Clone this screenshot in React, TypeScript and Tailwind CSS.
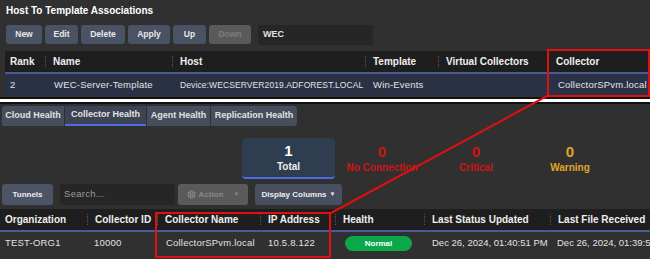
import { Settings } from "lucide-react";

const font = { fontFamily: '"Liberation Sans", Arial, sans-serif' };

const topCols = [
  { label: "Rank", w: "w-[40px]" },
  { label: "Name", w: "w-[127px]" },
  { label: "Host", w: "w-[193px]" },
  { label: "Template", w: "w-[73px]" },
  { label: "Virtual Collectors", w: "w-[110px]" },
  { label: "Collector", w: "flex-1" },
];

const botCols = [
  { label: "Organization", w: "w-[87px]" },
  { label: "Collector ID", w: "w-[70px]" },
  { label: "Collector Name", w: "w-[103px]" },
  { label: "IP Address", w: "w-[75px]" },
  { label: "Health", w: "w-[89px]" },
  { label: "Last Status Updated", w: "w-[126px]" },
  { label: "Last File Received", w: "flex-1" },
];

function HeaderRow({ cols, className }: { cols: { label: string; w: string }[]; className: string }) {
  return (
    <div className={`flex h-[21px] items-center bg-[#1e1e1e] text-[10px] font-bold text-[#eee] ${className}`}>
      {cols.map((c, i) => (
        <div key={c.label} className={`flex h-full shrink-0 items-center whitespace-nowrap ${c.w} ${i === 0 ? "pl-[5px]" : ""}`}>
          {i > 0 && <span className="mr-[7px] h-[11px] border-l border-dotted border-[#5a5a5a]" />}
          <span>{c.label}</span>
        </div>
      ))}
    </div>
  );
}

function TopButton({ label, disabled }: { label: string; disabled?: boolean }) {
  return (
    <button
      type="button"
      className={`h-[19px] rounded-[3px] text-[8.5px] font-bold whitespace-nowrap ${
        disabled ? "bg-[#5a5a5a] text-[#7d7d7d]" : "bg-[#4a5366] text-[#e8e8e8]"
      }`}
    >
      {label}
    </button>
  );
}

export default function App() {
  return (
    <div className="relative h-[259px] w-[650px] overflow-hidden bg-[#303030] text-[#e2e2e2]" style={font}>
      {/* top panel */}
      <div className="flex h-[97px] flex-col">
        <div className="pl-[6px] pt-[3px] text-[10px] font-bold leading-[16px] text-white">
          Host To Template Associations
        </div>
        <div className="mt-[6px] flex h-[19px] items-center gap-[3px] pl-[6px]">
          <div className="grid grid-cols-[36px_33px_44px_42px_33px_42px] gap-[3px]">
            <TopButton label="New" />
            <TopButton label="Edit" />
            <TopButton label="Delete" />
            <TopButton label="Apply" />
            <TopButton label="Up" />
            <TopButton label="Down" disabled />
          </div>
          <div className="ml-[4px] flex h-[20px] w-[115px] items-center rounded-[3px] bg-[#262626] px-[5px] text-[9px] font-bold">
            WEC
          </div>
        </div>
        <HeaderRow cols={topCols} className="ml-[5px] mt-[7px] h-[20px]" />
        <div className="ml-[5px] flex h-[24px] items-center whitespace-nowrap border-t-2 border-[#4a5a96] bg-[#2b3145] text-[9.5px] tracking-[0.2px]">
          <div className="w-[40px] shrink-0 pl-[5px]">2</div>
          <div className="w-[127px] shrink-0 pl-[9px]">WEC-Server-Template</div>
          <div className="w-[193px] shrink-0 pl-[8px] text-[8.5px] tracking-[0.1px]">Device:WECSERVER2019.ADFOREST.LOCAL</div>
          <div className="w-[73px] shrink-0 pl-[8px]">Win-Events</div>
          <div className="w-[110px] shrink-0" />
          <div className="flex-1 pl-[10px]">CollectorSPvm.local</div>
        </div>
      </div>

      {/* separator between the two captures */}
      <div className="h-[2px] bg-[#111]" />
      <div className="h-[3px] bg-white" />
      <div className="h-[2px] bg-[#111]" />

      {/* bottom panel */}
      <div className="flex flex-col">
        <div className="mt-[2px] flex h-[20px] gap-[1px] pl-[2px] text-[9px] font-bold whitespace-nowrap">
          <div className="flex w-[62px] items-center justify-center rounded-tl-[3px] bg-[#464d5b]">Cloud Health</div>
          <div className="flex w-[81px] items-center justify-center border-b-2 border-[#4a6ee0] bg-[#3c4352]">Collector Health</div>
          <div className="flex w-[63px] items-center justify-center bg-[#464d5b]">Agent Health</div>
          <div className="flex w-[86px] items-center justify-center rounded-r-[3px] bg-[#464d5b]">Replication Health</div>
        </div>

        <div className="ml-[242px] mt-[12px] grid h-[41px] grid-cols-[93px_94px_94px_94px] text-center font-bold whitespace-nowrap">
          <div className="flex flex-col items-center justify-center rounded-[4px] border-b-2 border-[#4a6ee0] bg-[#2f3d50]">
            <span className="text-[15px] leading-[19px] text-white">1</span>
            <span className="text-[10px] leading-[14px] text-[#eee]">Total</span>
          </div>
          <div className="flex flex-col items-center justify-center text-[#d01414]">
            <span className="text-[15px] leading-[19px]">0</span>
            <span className="text-[10px] leading-[14px]">No Connection</span>
          </div>
          <div className="flex flex-col items-center justify-center text-[#d01414]">
            <span className="text-[15px] leading-[19px]">0</span>
            <span className="text-[10px] leading-[14px]">Critical</span>
          </div>
          <div className="flex flex-col items-center justify-center text-[#e0a526]">
            <span className="text-[15px] leading-[19px]">0</span>
            <span className="text-[10px] leading-[14px]">Warning</span>
          </div>
        </div>

        <div className="mt-[5px] flex h-[21px] items-center pl-[2px] text-[8px] font-bold whitespace-nowrap">
          <button type="button" className="h-full w-[51px] rounded-[3px] bg-[#4c5566] text-[#eee]">Tunnels</button>
          <div className="ml-[7px] flex h-full w-[115px] items-center rounded-[3px] bg-[#262626] px-[4px] text-[9.5px] font-normal tracking-[0.3px] text-[#9a9a9a]">
            Search...
          </div>
          <button type="button" className="ml-[3px] flex h-full w-[70px] items-center justify-center gap-[3px] rounded-[3px] bg-[#5a5a5a] text-[#888]">
            <Settings size={9} strokeWidth={3} />
            <span>Action</span>
            <span className="ml-[7px] text-[6px]">▼</span>
          </button>
          <button type="button" className="ml-[7px] flex h-full w-[87px] items-center justify-center gap-[3px] rounded-[3px] bg-[#474f60] text-[#eee]">
            <span>Display Columns</span>
            <span className="text-[6px]">▼</span>
          </button>
        </div>

        <HeaderRow cols={botCols} className="mt-[4px]" />
        <div className="flex h-[25px] items-center whitespace-nowrap border-t-2 border-[#4a5a96] text-[9.5px]">
          <div className="w-[87px] shrink-0 pl-[5px] tracking-[0.2px]">TEST-ORG1</div>
          <div className="w-[70px] shrink-0 pl-[7px] tracking-[0.2px]">10000</div>
          <div className="w-[103px] shrink-0 pl-[9px] tracking-[0.2px]">CollectorSPvm.local</div>
          <div className="w-[75px] shrink-0 pl-[8px] tracking-[0.2px]">10.5.8.122</div>
          <div className="w-[89px] shrink-0 pl-[10px]">
            <span className="flex h-[15px] w-[67px] items-center justify-center rounded-full bg-[#0aa84a] text-[8px] font-bold text-white">
              Normal
            </span>
          </div>
          <div className="w-[126px] shrink-0 pl-[8px]">Dec 26, 2024, 01:40:51 PM</div>
          <div className="min-w-0 flex-1 overflow-hidden pl-[7px]">Dec 26, 2024, 01:39:52 PM</div>
        </div>
      </div>

      {/* red annotation overlay */}
      <div className="absolute left-[547px] top-[49px] h-[48px] w-[103px] border-2 border-[#e01010]" />
      <div className="absolute left-[155px] top-[212px] h-[46px] w-[176px] border-2 border-[#e01010]" />
      <svg className="pointer-events-none absolute left-0 top-0" width="650" height="259">
        <line x1="547" y1="96" x2="331" y2="213" stroke="#e01010" strokeWidth="2" />
      </svg>
    </div>
  );
}
